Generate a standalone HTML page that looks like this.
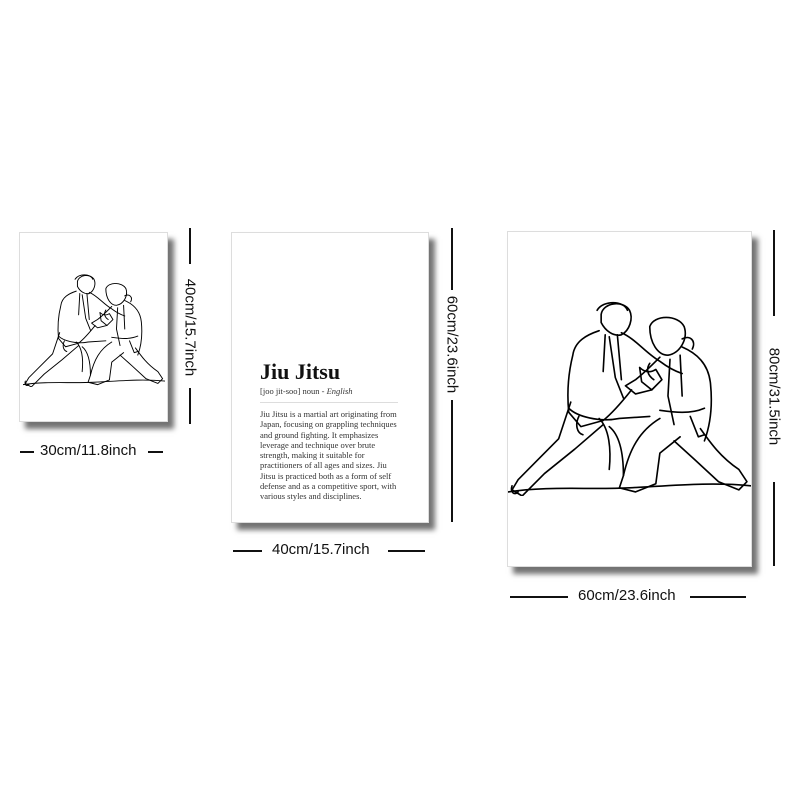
<!DOCTYPE html>
<html><head><meta charset="utf-8"><style>
html,body{margin:0;padding:0;background:#fff;}
body{width:800px;height:800px;position:relative;overflow:hidden;font-family:"Liberation Sans",sans-serif;}
.p{position:absolute;background:#fff;border:1px solid #ddd;box-shadow:6px 7px 5px rgba(0,0,0,0.55);}
.d{position:absolute;font-size:15px;color:#111;white-space:nowrap;}
.l{position:absolute;background:#111;}
.v{position:absolute;font-size:15px;color:#111;white-space:nowrap;transform:rotate(90deg);transform-origin:center;}
.serif{font-family:"Liberation Serif",serif;}
</style></head><body>
<svg width="0" height="0" style="position:absolute"><defs>
<g id="fig" fill="none" stroke="#000" stroke-width="1.6" stroke-linejoin="round" stroke-linecap="round">
<path d="M92 18c2-12 22-14 28-4 4 8 0 20-8 24-8 2-16-4-20-12z"/>
<path d="M88 14c6-10 26-10 30 0"/>
<path d="M140 30c4-12 28-12 34 0 4 12-4 26-16 28-10 0-18-12-18-28z"/>
<path d="M172 42c8-4 14 2 10 10"/>
<path d="M90 34c-12 4-24 10-26 24-4 16-6 36-4 56l12 14 22-6c10-8 20-20 28-30"/>
<path d="M100 40l6 40 8 20M108 38l4 44M96 38l-2 36"/>
<path d="M112 36c14 6 24 20 38 28 8 6 16 10 22 12"/>
<path d="M150 60c-8 8-16 16-24 22l-10 6 10 8 16-4"/>
<path d="M172 50c14 6 26 16 28 36 2 20 0 40-6 56"/>
<path d="M160 62l-2 36 6 28M170 58l2 40"/>
<path d="M60 110c8 8 30 14 50 10l30-2M150 112c14 2 30 4 44-2"/>
<path d="M62 104l-12 36-24 24-16 16-6 10 10 6 22-22 30-24 28-24"/>
<path d="M100 128c10 8 14 26 14 48M90 120c10 10 12 30 10 50"/>
<path d="M150 120c-20 12-30 30-36 56l-4 12 16 4 20-8 4-30 20-16"/>
<path d="M190 130c10 14 20 28 38 40l8 12-8 8-20-8-24-22-20-18"/>
<path d="M130 70c4 4 10 6 16 2l6 10-10 10-10-8zM140 66c-4 6-2 12 4 16"/>
<path d="M70 118c-4 8-2 16 4 18M180 118l8 20 6-2"/>
<path d="M0 192c40-6 80-2 120-4s80-6 120-2"/>
<path d="M4 186c-2 6 2 10 6 6"/>
</g></defs></svg>

<!-- panel 1 -->
<div class="p" style="left:19px;top:232px;width:147px;height:188px;">
<svg style="position:absolute;left:3px;top:38px" width="142" height="116" viewBox="0 0 240 196" preserveAspectRatio="none"><use href="#fig"/></svg>
</div>
<div class="l" style="left:189px;top:228px;width:2px;height:36px"></div>
<div class="l" style="left:189px;top:388px;width:2px;height:36px"></div>
<div class="v" style="left:130px;top:319px;width:120px;text-align:center">40cm/15.7inch</div>
<div class="l" style="left:20px;top:451px;width:14px;height:2px"></div>
<div class="l" style="left:148px;top:451px;width:15px;height:2px"></div>
<div class="d" style="left:40px;top:442px">30cm/11.8inch</div>

<!-- panel 2 -->
<div class="p" style="left:231px;top:232px;width:196px;height:289px;">
<div class="serif" style="position:absolute;left:28px;top:126px;font-size:22px;font-weight:bold;color:#111">Jiu Jitsu</div>
<div class="serif" style="position:absolute;left:28px;top:153px;font-size:8.5px;color:#333">[joo jit-soo] noun - <i>English</i></div>
<div style="position:absolute;left:28px;top:169px;width:138px;height:1px;background:#ddd"></div>
<div class="serif" style="position:absolute;left:28px;top:176px;width:138px;font-size:8.5px;line-height:10.3px;color:#333">Jiu Jitsu is a martial art originating from Japan, focusing on grappling techniques and ground fighting. It emphasizes leverage and technique over brute strength, making it suitable for practitioners of all ages and sizes. Jiu Jitsu is practiced both as a form of self defense and as a competitive sport, with various styles and disciplines.</div>
</div>
<div class="l" style="left:451px;top:228px;width:2px;height:62px"></div>
<div class="l" style="left:451px;top:400px;width:2px;height:122px"></div>
<div class="v" style="left:392px;top:336px;width:120px;text-align:center">60cm/23.6inch</div>
<div class="l" style="left:233px;top:550px;width:29px;height:2px"></div>
<div class="l" style="left:388px;top:550px;width:37px;height:2px"></div>
<div class="d" style="left:272px;top:541px">40cm/15.7inch</div>

<!-- panel 3 -->
<div class="p" style="left:507px;top:231px;width:243px;height:334px;">
<svg style="position:absolute;left:0px;top:64px" width="243" height="200" viewBox="0 0 240 196" preserveAspectRatio="none"><use href="#fig"/></svg>
</div>
<div class="l" style="left:773px;top:230px;width:2px;height:86px"></div>
<div class="l" style="left:773px;top:482px;width:2px;height:84px"></div>
<div class="v" style="left:714px;top:388px;width:120px;text-align:center">80cm/31.5inch</div>
<div class="l" style="left:510px;top:596px;width:58px;height:2px"></div>
<div class="l" style="left:690px;top:596px;width:56px;height:2px"></div>
<div class="d" style="left:578px;top:587px">60cm/23.6inch</div>
</body></html>
